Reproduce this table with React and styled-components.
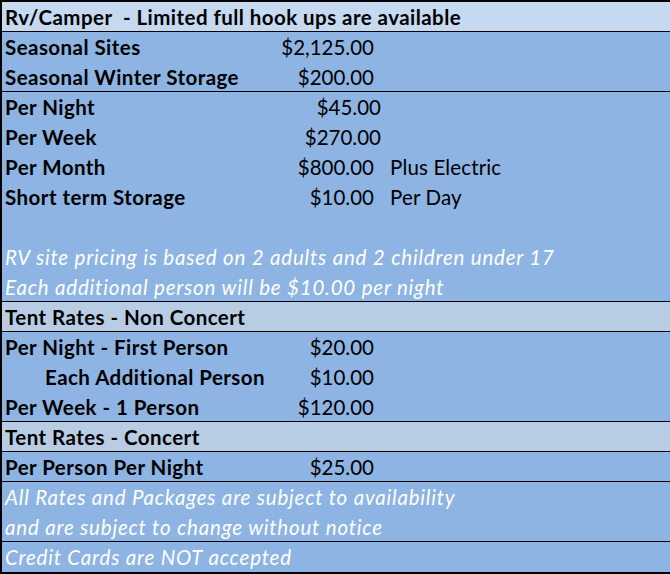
import styled, { createGlobalStyle } from 'styled-components';

const GlobalStyle = createGlobalStyle`
  html, body {
    margin: 0;
    padding: 0;
    background: #ffffff;
  }
  body {
    font-family: Lato, "Liberation Sans", sans-serif;
  }
`;

// rate sheet data, one entry per spreadsheet row
const sections = [
  {
    rows: [{ kind: 'head', label: 'Rv/Camper  - Limited full hook ups are available' }],
  },
  {
    rows: [
      { label: 'Seasonal Sites', price: '$2,125.00' },
      { label: 'Seasonal Winter Storage', price: '$200.00' },
    ],
  },
  {
    rows: [
      { label: 'Per Night', price: '$45.00', wide: true },
      { label: 'Per Week', price: '$270.00', wide: true },
      { label: 'Per Month', price: '$800.00', note: 'Plus Electric' },
      { label: 'Short term Storage', price: '$10.00', note: 'Per Day' },
      { kind: 'blank' },
      { kind: 'note', label: 'RV site pricing is based on 2 adults and 2 children under 17' },
      { kind: 'note', label: 'Each additional person will be $10.00 per night' },
    ],
  },
  {
    rows: [{ kind: 'head', label: 'Tent Rates - Non Concert', tint: 'tent' }],
  },
  {
    rows: [
      { label: 'Per Night - First Person', price: '$20.00' },
      { label: 'Each Additional Person', price: '$10.00', indent: true },
      { label: 'Per Week - 1 Person', price: '$120.00' },
    ],
  },
  {
    rows: [{ kind: 'head', label: 'Tent Rates - Concert', tint: 'tent' }],
  },
  {
    rows: [{ label: 'Per Person Per Night', price: '$25.00' }],
  },
  {
    rows: [
      { kind: 'note', label: 'All Rates and Packages are subject to availability' },
      { kind: 'note', label: 'and are subject to change without notice' },
    ],
  },
  {
    rows: [{ kind: 'note', label: 'Credit Cards are NOT accepted' }],
    last: true,
  },
];

function App() {
  return (
    <>
      <GlobalStyle />
      <Sheet>
        {sections.map((section, si) => (
          <Section key={si} $last={section.last}>
            {section.rows.map((row, ri) => {
              if (row.kind === 'head') {
                return (
                  <HeadRow key={ri} $tint={row.tint}>
                    {row.label}
                  </HeadRow>
                );
              }
              if (row.kind === 'note') {
                return <NoteRow key={ri}>{row.label}</NoteRow>;
              }
              if (row.kind === 'blank') {
                return <BlankRow key={ri} />;
              }
              return (
                <RateRow key={ri}>
                  <Label $indent={row.indent}>{row.label}</Label>
                  <Price $wide={row.wide}>{row.price}</Price>
                  <Note>{row.note}</Note>
                </RateRow>
              );
            })}
          </Section>
        ))}
      </Sheet>
    </>
  );
}

const Sheet = styled.div`
  width: 670px;
  height: 574px;
  box-sizing: border-box;
  border-top: 2px solid #000;
  border-left: 2px solid #000;
  border-bottom: 2px solid #000;
  background: #8db4e2;
  display: flex;
  flex-direction: column;
  font-size: 20.5px;
  color: #000;
`;

const Section = styled.div`
  display: flex;
  flex-direction: column;
  border-bottom: ${(p) => (p.$last ? 'none' : '1px solid #000')};
  & > div:last-child {
    height: ${(p) => (p.$last ? '30px' : '29px')};
  }
`;

const Row = styled.div`
  height: 30px;
  box-sizing: border-box;
  padding-left: 3px;
  display: flex;
  align-items: center;
  white-space: pre;
  overflow: hidden;
`;

const HeadRow = styled(Row)`
  background: ${(p) => (p.$tint === 'tent' ? '#b8cce4' : '#c5d9f1')};
  font-weight: 700;
  letter-spacing: 0.45px;
`;

const NoteRow = styled(Row)`
  color: #ffffff;
  font-style: italic;
  letter-spacing: 0.8px;
`;

const BlankRow = styled(Row)``;

const RateRow = styled(Row)`
  display: grid;
  grid-template-columns: 260px 116px 1fr;
`;

const Label = styled.span`
  font-weight: 700;
  letter-spacing: 0.45px;
  padding-left: ${(p) => (p.$indent ? '40px' : '0')};
`;

const Price = styled.span`
  text-align: right;
  padding-right: ${(p) => (p.$wide ? '0' : '7px')};
`;

const Note = styled.span`
  padding-left: 9px;
  letter-spacing: 0.15px;
`;

export default App;
